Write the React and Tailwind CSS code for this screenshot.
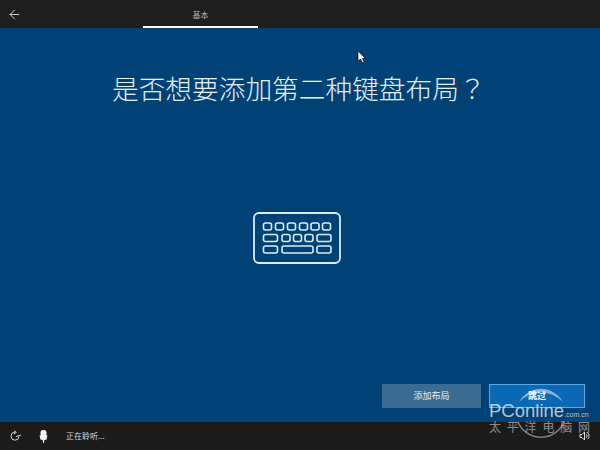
import React from 'react';
import { ArrowLeft } from 'lucide-react';

const cjk = { fontFamily: '"Noto Sans CJK SC", "Liberation Sans", sans-serif' };

function KeyboardIcon() {
  const keys = [
    [263.5, 223, 8, 7], [275.5, 223, 8, 7], [287.5, 223, 8, 7], [299.5, 223, 8, 7], [311, 223, 8, 7], [322.5, 223, 8, 7],
    [263.5, 234.5, 14, 7], [282, 234.5, 8, 7], [293.5, 234.5, 8, 7], [305, 234.5, 8, 7], [317, 234.5, 14, 7],
    [263.5, 246, 14, 7], [282, 246, 31, 7], [317, 246, 14, 7],
  ];
  return (
    <svg width="90" height="56" viewBox="251 210 90 56" fill="none" stroke="#dcedf8" strokeWidth="1.6">
      <rect x="254" y="213" width="86" height="50" rx="5" strokeWidth="1.8" />
      {keys.map(([x, y, w, h], i) => (
        <rect key={i} x={x} y={y} width={w} height={h} rx="2" />
      ))}
    </svg>
  );
}

function Cursor() {
  return (
    <svg className="absolute left-[357px] top-[50px]" width="10" height="14" viewBox="0 0 10 14">
      <path d="M1 1 L1 11 L3.5 9 L5.5 13 L7 12 L5.5 8.5 L8.5 8.5 Z" fill="#fff" stroke="#111" strokeWidth="0.7" />
    </svg>
  );
}

function Watermark() {
  return (
    <div className="absolute left-[489px] top-[385px] h-[60px] w-[102px] pointer-events-none">
      <svg className="absolute left-[25px] top-0" width="54" height="56" viewBox="0 0 54 56" fill="none">
        <path d="M5 17 A25 25 0 0 1 49 17 A30 30 0 0 0 5 17 Z" fill="#ffffff" fillOpacity="0.5" />
        <path d="M4 37 A25 25 0 0 0 50 37" stroke="#ffffff" strokeOpacity="0.45" strokeWidth="1.5" />
      </svg>
      <div className="absolute left-0 top-[16px] h-[19px] flex items-baseline whitespace-nowrap text-white/70 font-['Liberation_Sans',sans-serif]">
        <span className="text-[18.5px] leading-[19px]">PConline</span>
        <span className="text-[7px] leading-none">.com.cn</span>
      </div>
      <div style={cjk} className="absolute left-0 top-[36px] w-[101px] flex justify-between text-[12px] leading-[12px] text-white/50">
        <span>太</span><span>平</span><span>洋</span><span>电</span><span>脑</span><span>网</span>
      </div>
    </div>
  );
}

export default function App() {
  return (
    <main style={cjk} className="relative w-[600px] h-[450px] overflow-hidden bg-[#004275] text-white flex flex-col">
      {/* top bar */}
      <header className="h-[28px] shrink-0 bg-[#1e1e1e] flex items-stretch">
        <div className="w-[143px] pl-[7px] flex items-center">
          <ArrowLeft size={15} className="text-[#d8d8d8]" strokeWidth={1.5} />
        </div>
        <div className="w-[115px] pt-[3px] flex items-center justify-center border-b-2 border-white text-[8px] text-[#b5b5b5]">
          基本
        </div>
      </header>

      <section className="flex-1 flex flex-col min-h-0">
        <h1 className="mt-[42px] pl-[112px] text-[26.7px] leading-[36px] font-light text-[#e6f1f8] whitespace-nowrap">
          是否想要添加第二种键盘布局<span style={{ fontFamily: '"Noto Sans CJK TC", sans-serif' }}>？</span>
        </h1>
        <div className="mt-[104px] pl-[251px]">
          <KeyboardIcon />
        </div>
        <div className="mt-auto mb-[14px] flex justify-end gap-[8px] pr-[15px]">
          <button className="w-[99px] h-[24px] bg-[#3a6b92] text-[9px] text-[#e6eef4]">添加布局</button>
          <button className="w-[96px] h-[24px] bg-[#0a68b4] border border-[#5aa7e2] text-[9px] font-bold text-white">跳过</button>
        </div>
      </section>

      {/* bottom bar */}
      <footer className="h-[28px] shrink-0 bg-[#1b1b1b] flex items-center pl-[9px] pr-[10px]">
        <svg width="13" height="12" viewBox="0 0 13 12" fill="none" stroke="#d0d0d0" strokeWidth="1">
          <path d="M6 2.2 A4 4 0 1 0 10 6.2" />
          <path d="M5 0.8 L7.4 2.4 L5 3.8" />
          <path d="M7 6.5 L12 5" />
        </svg>
        <svg className="ml-[17px]" width="9" height="13" viewBox="0 0 9 13" fill="#f2f2f2">
          <rect x="1.5" y="0" width="6" height="9" rx="2.6" />
          <path d="M0.5 5.5 L8.5 5.5 L7.5 9.5 L5.2 10.2 L5 13 L4 13 L3.8 10.2 L1.5 9.5 Z" />
        </svg>
        <span className="ml-[18px] text-[8px] text-[#dcdcdc]">正在聆听...</span>
        <svg className="ml-auto" width="11" height="10" viewBox="0 0 11 10" fill="none" stroke="#e0e0e0" strokeWidth="1">
          <path d="M1 3.5 H3 L5.5 1 V9 L3 6.5 H1 Z" />
          <path d="M7.2 3.2 A2.5 2.5 0 0 1 7.2 6.8" />
          <path d="M8.8 2 A4.2 4.2 0 0 1 8.8 8" />
        </svg>
      </footer>

      <Cursor />
      <Watermark />
    </main>
  );
}
